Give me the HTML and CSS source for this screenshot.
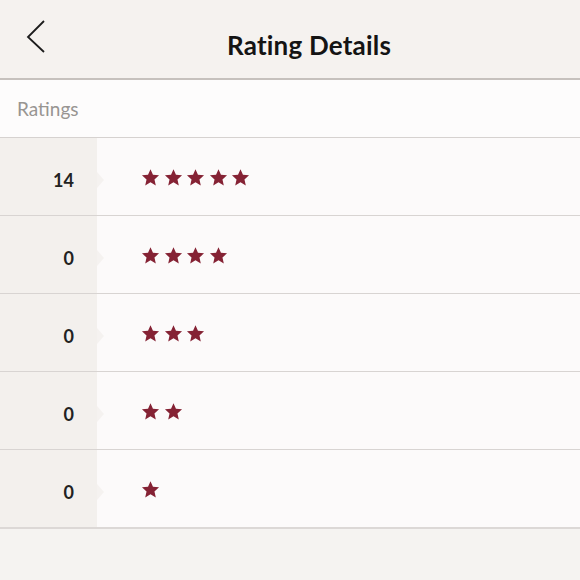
FILE: index.html
```html
<!DOCTYPE html>
<html>
<head>
<meta charset="utf-8">
<link rel="stylesheet" href="styles.css">
</head>
<body>
<div class="page">
  <header class="topbar">
    <div class="back">
      <svg width="22" height="34" viewBox="0 0 22 34"><polyline points="18,1 2,17 18,32" fill="none" stroke="#1c1c1c" stroke-width="1.8"/></svg>
    </div>
    <h1 class="title">Rating Details</h1>
  </header>
  <div class="section-label">Ratings</div>
  <div class="rows">
    <div class="row"><div class="count">14</div><div class="stars" data-n="5"></div></div>
    <div class="row"><div class="count">0</div><div class="stars" data-n="4"></div></div>
    <div class="row"><div class="count">0</div><div class="stars" data-n="3"></div></div>
    <div class="row"><div class="count">0</div><div class="stars" data-n="2"></div></div>
    <div class="row"><div class="count">0</div><div class="stars" data-n="1"></div></div>
  </div>
</div>
<script>
document.querySelectorAll('.stars').forEach(function (el) {
  var n = +el.getAttribute('data-n');
  var s = '';
  for (var i = 0; i < n; i++) {
    s += '<svg class="star" width="19" height="19" viewBox="0 0 24 24"><path d="M12 1.5l3.1 7.1 7.7.7-5.8 5.1 1.7 7.6L12 18.1l-6.7 3.9 1.7-7.6-5.8-5.1 7.7-.7z" fill="#852234"/></svg>';
  }
  el.innerHTML = s;
});
</script>
</body>
</html>
```
FILE: styles.css
```css
html, body {
  margin: 0;
  padding: 0;
  background: #f5f3f1;
}
.page {
  width: 580px;
  height: 580px;
  font-family: "Lato", "Open Sans", sans-serif;
  background: #f5f3f1;
}
.topbar {
  height: 78px;
  border-bottom: 2px solid #c6c1bd;
  background: #f5f2ef;
  display: flex;
  align-items: center;
  position: relative;
}
.back {
  width: 22px;
  height: 34px;
  margin-left: 26px;
  margin-top: -4px;
}
.title {
  margin: 0;
  position: absolute;
  left: 38px;
  right: 0;
  text-align: center;
  font-size: 26px;
  font-weight: 700;
  color: #141414;
  top: 28px;
  line-height: 34px;
  letter-spacing: 0.2px;
}
.section-label {
  height: 57px;
  background: #fdfcfc;
  border-bottom: 1px solid #d6d2d0;
  display: flex;
  align-items: center;
  padding-left: 17px;
  font-size: 19px;
  color: #989592;
}
.rows {
  background: #fcfafa;
  border-bottom: 2px solid #dcd8d6;
}
.row {
  height: 77px;
  display: flex;
  border-bottom: 1px solid #d8d4d2;
}
.row:last-child {
  border-bottom: none;
}
.count {
  width: 97px;
  background: #f3f0ed;
  display: flex;
  align-items: center;
  justify-content: flex-end;
  box-sizing: border-box;
  padding-right: 23px;
  padding-top: 6px;
  font-size: 18px;
  font-weight: 700;
  color: #222;
  position: relative;
}
.count::after {
  content: "";
  position: absolute;
  right: -7px;
  top: 50%;
  margin-top: -5px;
  border-left: 7px solid #f5f2f0;
  border-top: 8px solid transparent;
  border-bottom: 8px solid transparent;
}
.stars {
  display: flex;
  align-items: center;
  gap: 3.5px;
  padding-left: 44px;
  padding-top: 2px;
}
.star {
  display: block;
}
```
